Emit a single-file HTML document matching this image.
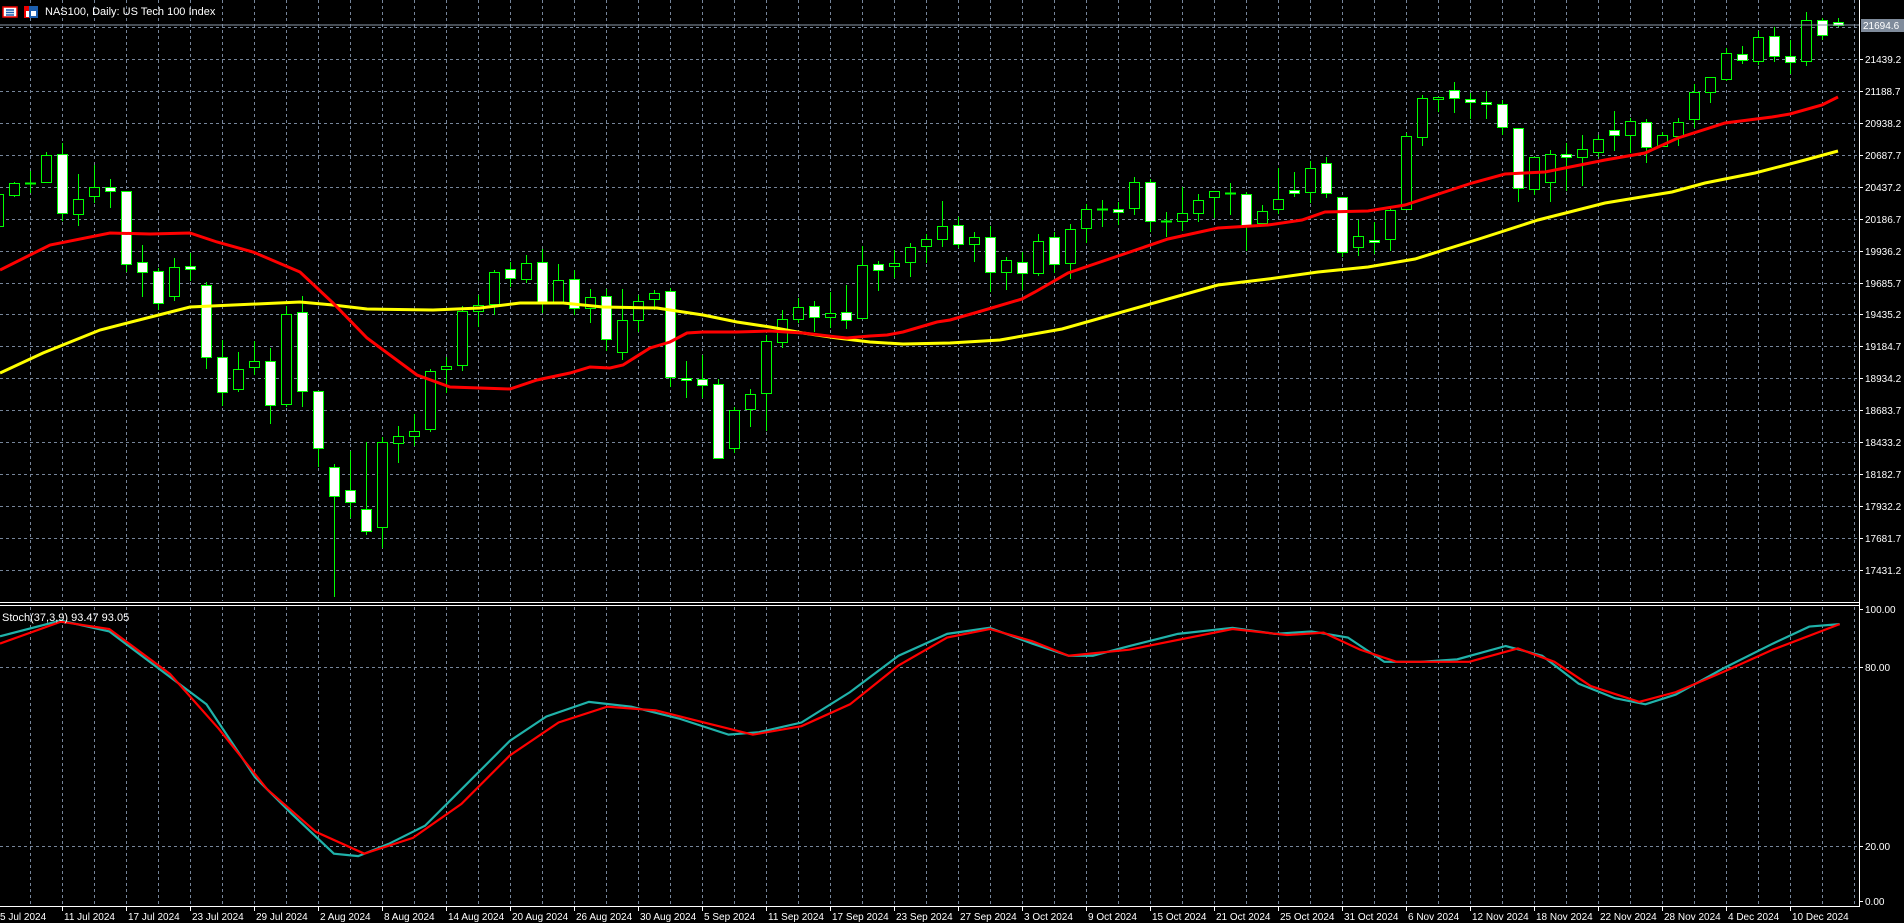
<!DOCTYPE html>
<html><head><meta charset="utf-8"><style>
html,body{margin:0;padding:0;background:#000;overflow:hidden}
svg{display:block}
text{font-family:"Liberation Sans",sans-serif;font-size:10px;fill:#fff}
</style></head><body>
<svg id="c" width="1904" height="923" xmlns="http://www.w3.org/2000/svg">
<rect width="1904" height="923" fill="#000"/>
<g id="grid" stroke="#76859a" stroke-width="1" stroke-dasharray="3 3"></g>
<g id="cand"></g>
<polyline fill="none" stroke="#ffff00" stroke-width="3" points="0,373 43,353 100,330 190,307 300,302 333,305 367,309 433,310 480,308 520,303 563,303 603,307 657,308 703,315 737,322 770,327 803,333 837,338 870,342 903,344 950,343 1000,340 1062,329 1168,299 1218,285 1268,279 1318,272 1368,267 1415,259 1479,239 1538,220 1605,203 1672,192 1705,183 1755,173 1805,160 1838,151"/>
<polyline fill="none" stroke="#ff0000" stroke-width="3" points="0,270 50,245 110,233 150,234 190,233 217,242 253,252 300,272 333,303 367,338 417,375 450,387 480,388 510,389 537,380 570,373 590,367 610,368 623,365 650,348 670,342 687,333 703,332 737,332 770,331 803,333 837,337 847,338 870,336 887,335 903,332 937,322 950,320 978,312 1022,299 1035,292 1068,273 1118,256 1168,239 1218,228 1268,225 1302,220 1325,212 1368,211 1405,205 1472,183 1505,174 1545,172 1605,160 1645,153 1678,138 1725,123 1772,117 1790,114 1822,105 1838,97"/>
<line x1="0" y1="25" x2="1859" y2="25" stroke="#8a97a8" stroke-width="1"/>
<g transform="scale(1.2143)" fill="none" stroke-width="1.8">
<polyline stroke="#20b2aa" points="0,524 50,511 90,520 130,550 170,580 210,640 240,670 275,703 295,705 320,695 350,680 380,650 420,610 450,590 485,578 520,582 560,592 600,605 625,603 660,595 700,570 740,540 780,522 815,517 850,530 880,540 900,540 930,532 970,522 1015,517 1050,522 1080,520 1110,525 1140,545 1170,545 1200,543 1240,532 1270,540 1300,563 1330,575 1355,580 1380,572 1420,550 1460,530 1490,516 1515,514"/>
<polyline stroke="#ff0000" points="0,530 50,512 90,518 140,555 180,600 220,650 260,685 300,703 340,690 380,662 420,622 460,595 500,582 540,585 580,595 620,605 660,598 700,580 740,548 780,525 815,518 850,528 880,540 930,535 1015,518 1060,523 1090,521 1120,535 1150,545 1210,545 1250,534 1280,545 1310,565 1350,578 1380,570 1420,553 1460,535 1515,514"/>
</g>
<g stroke="#fff" stroke-width="1">
<line x1="0" y1="602.5" x2="1859" y2="602.5"/>
<line x1="0" y1="605.5" x2="1859" y2="605.5"/>
<line x1="0" y1="906.5" x2="1860" y2="906.5"/>
<line x1="1859.5" y1="0" x2="1859.5" y2="907"/>
</g>
<g id="ax"></g>
<rect x="1861" y="19" width="43" height="13" fill="#7f8b9b"/>
<text x="1863" y="29">21694.6</text>
<g>
<rect x="3" y="7" width="14" height="10" fill="#fff" stroke="#e00" stroke-width="1.5"/>
<line x1="6" y1="10" x2="14" y2="10" stroke="#1c5fb0" stroke-width="1.5"/>
<line x1="6" y1="12.5" x2="14" y2="12.5" stroke="#1c5fb0" stroke-width="1.5"/>
<line x1="6" y1="15" x2="14" y2="15" stroke="#1c5fb0" stroke-width="1.5"/>
<rect x="24" y="6" width="5" height="12" fill="#e00"/>
<rect x="29" y="6" width="9" height="12" fill="#1c5fb0"/>
<rect x="31" y="11" width="5" height="5" fill="#fff"/>
<rect x="26" y="11" width="3" height="6" fill="#fff"/>
</g>
<text x="45" y="15" style="font-size:11px">NAS100, Daily:  US Tech 100 Index</text>
<text x="2" y="621" style="font-size:11px">Stoch(37,3,9) 93.47 93.05</text>
</svg>
<script>
var NS="http://www.w3.org/2000/svg";
function el(p,t,a,txt){var e=document.createElementNS(NS,t);for(var k in a)e.setAttribute(k,a[k]);if(txt!=null)e.textContent=txt;p.appendChild(e);return e;}
var g=document.getElementById('grid');
for(var x=30;x<1859;x+=32){el(g,'line',{x1:x+.5,y1:0,x2:x+.5,y2:601});el(g,'line',{x1:x+.5,y1:607,x2:x+.5,y2:906});}
for(var k=0;k<=17;k++){var y=570-k*31.94;el(g,'line',{x1:0,y1:Math.round(y)+.5,x2:1859,y2:Math.round(y)+.5});}
el(g,'line',{x1:0,y1:667.5,x2:1859,y2:667.5});
el(g,'line',{x1:0,y1:846.5,x2:1859,y2:846.5});
var ax=document.getElementById('ax');
for(var k=0;k<=16;k++){var y=Math.round(570-k*31.94);var v=(17431.2+250.5*k).toFixed(1);
el(ax,'line',{x1:1859,y1:y+.5,x2:1863,y2:y+.5,stroke:'#fff'});el(ax,'text',{x:1865,y:y+4},v);}
[[609,'100.00'],[667,'80.00'],[846,'20.00'],[901,'0.00']].forEach(function(a){el(ax,'line',{x1:1859,y1:a[0]+.5,x2:1863,y2:a[0]+.5,stroke:'#fff'});el(ax,'text',{x:1865,y:a[0]+4},a[1]);});
var d=['5 Jul 2024','11 Jul 2024','17 Jul 2024','23 Jul 2024','29 Jul 2024','2 Aug 2024','8 Aug 2024','14 Aug 2024','20 Aug 2024','26 Aug 2024','30 Aug 2024','5 Sep 2024','11 Sep 2024','17 Sep 2024','23 Sep 2024','27 Sep 2024','3 Oct 2024','9 Oct 2024','15 Oct 2024','21 Oct 2024','25 Oct 2024','31 Oct 2024','6 Nov 2024','12 Nov 2024','18 Nov 2024','22 Nov 2024','28 Nov 2024','4 Dec 2024','10 Dec 2024'];
d.forEach(function(s,i){var x=-2+64*i;if(i>0)el(ax,'line',{x1:x+.5,y1:906,x2:x+.5,y2:911,stroke:'#fff'});el(ax,'text',{x:Math.max(0,x+2),y:920},s);});
var C=[[194,226,190,230,0],[183,195,182,197,0],[183,183,171,193,0],[155,182,152,183,0],[154,213,143,221,1],[199,214,174,226,0],[187,196,165,203,0],[187,191,179,208,1],[191,264,191,272,1],[262,272,245,297,1],[271,303,268,310,1],[267,296,258,301,0],[266,269,253,281,1],[285,357,282,369,1],[357,392,340,406,1],[369,389,352,392,0],[361,367,341,375,0],[361,405,348,424,1],[314,404,306,407,0],[312,391,296,407,1],[391,448,391,467,1],[467,496,464,597,1],[490,502,451,518,1],[509,531,442,535,1],[442,527,437,548,0],[436,443,426,463,0],[431,436,414,446,0],[371,429,369,432,0],[366,369,357,393,0],[311,365,306,371,0],
[305,311,295,327,0],[272,304,270,315,0],[269,278,262,287,1],[263,279,255,283,0],[262,302,249,313,1],[280,302,264,302,0],[279,308,270,315,1],[297,308,289,323,0],[296,339,289,351,1],[320,352,289,360,0],[301,320,295,332,0],[293,299,290,310,0],[291,377,288,387,1],[378,380,361,398,1],[379,385,355,398,1],[384,458,379,459,1],[410,448,407,453,0],[394,409,389,427,0],[341,393,335,431,0],[319,342,310,348,0],[307,319,298,323,0],[306,317,301,332,1],[313,317,292,328,0],[312,320,285,329,1],[265,318,246,318,0],[264,270,261,291,1],[263,266,250,278,0],[247,262,243,277,0],[239,246,234,263,0],[226,239,201,247,0],
[225,244,217,248,1],[237,244,232,262,0],[237,272,226,292,1],[260,272,257,290,0],[262,273,252,290,1],[241,273,234,276,0],[237,264,232,273,1],[229,263,224,279,0],[209,228,204,243,0],[209,209,200,227,0],[209,212,202,225,1],[182,208,177,215,0],[182,221,179,232,1],[221,221,212,237,0],[213,221,187,231,0],[200,213,194,222,0],[191,197,191,218,0],[193,193,183,215,0],[194,226,192,251,1],[211,223,205,225,0],[199,209,168,214,0],[190,193,172,197,1],[168,192,161,203,0],[163,193,157,198,1],[197,252,197,257,1],[236,247,220,256,0],[240,242,222,254,1],[210,239,207,251,0],[136,209,133,210,0],
[98,137,95,146,0],[97,99,97,112,0],[90,98,82,113,1],[99,102,93,119,1],[102,104,91,119,1],[104,127,100,135,1],[128,188,128,202,1],[157,189,157,195,0],[154,182,150,202,0],[154,157,143,191,1],[149,157,135,186,0],[139,152,135,157,0],[130,135,111,151,1],[121,135,118,153,0],[122,147,119,163,1],[135,146,132,147,0],[122,136,118,146,0],[92,119,84,128,0],[77,92,77,103,0],[53,79,48,81,0],[54,60,46,64,1],[37,61,31,65,0],[36,56,27,62,1],[56,62,40,74,1],[20,61,12,66,0],[20,35,18,40,1],[22,25,18,27,1]];
var cg=document.getElementById('cand');
C.forEach(function(c,i){var x=-2+16*i;
el(cg,'line',{x1:x+.5,y1:c[2],x2:x+.5,y2:c[3],stroke:'#00ff00','stroke-width':1});
if(c[1]-c[0]<1){el(cg,'line',{x1:x-5,y1:c[0]+.5,x2:x+6,y2:c[0]+.5,stroke:'#00ff00','stroke-width':2});}
else el(cg,'rect',{x:x-4.5,y:c[0]+.5,width:10,height:c[1]-c[0],fill:c[4]?'#fff':'#000',stroke:'#00ff00','stroke-width':1});
});
</script>
</body></html>
